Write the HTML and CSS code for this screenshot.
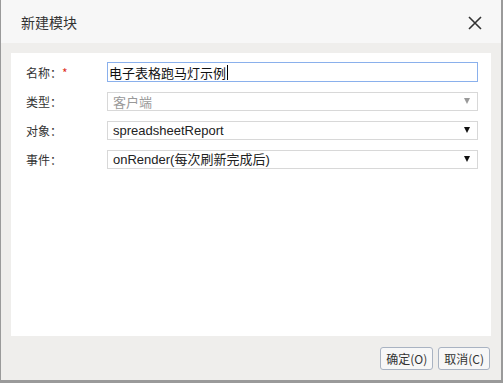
FILE: index.html
```html
<!DOCTYPE html>
<html lang="zh">
<head>
    <meta charset="UTF-8">
    <title>新建模块</title>
    <link rel="stylesheet" href="styles.css">
</head>
<body>
    <div class="dialog">
        <div class="dialog-header">
            <span class="dialog-title">新建模块</span>
            <svg class="close-icon" width="14" height="14" viewBox="0 0 14 14">
                <path d="M1 1 L13 13 M13 1 L1 13" stroke="#333" stroke-width="1.6" fill="none"/>
            </svg>
        </div>
        <div class="dialog-body">
            <div class="panel">
                <div class="form-row">
                    <label class="form-label">名称：<span class="required">*</span></label>
                    <div class="field field-focus">电子表格跑马灯示例<span class="caret"></span></div>
                </div>
                <div class="form-row">
                    <label class="form-label">类型：</label>
                    <div class="field select disabled">
                        <span class="field-text">客户端</span>
                        <span class="arrow"></span>
                    </div>
                </div>
                <div class="form-row">
                    <label class="form-label">对象：</label>
                    <div class="field select">
                        <span class="field-text">spreadsheetReport</span>
                        <span class="arrow"></span>
                    </div>
                </div>
                <div class="form-row">
                    <label class="form-label">事件：</label>
                    <div class="field select">
                        <span class="field-text">onRender(每次刷新完成后)</span>
                        <span class="arrow"></span>
                    </div>
                </div>
            </div>
            <div class="dialog-footer">
                <button class="btn">确定(O)</button>
                <button class="btn">取消(C)</button>
            </div>
        </div>
    </div>
</body>
</html>
```

FILE: styles.css
```css
html, body {
    margin: 0;
    padding: 0;
}

body {
    background: #9a9a9a;
    font-family: "Liberation Sans", "Noto Sans CJK SC", sans-serif;
    color: #333;
}

.dialog {
    box-sizing: border-box;
    width: 503px;
    height: 383px;
    border-left: 1px solid #9a9a9a;
    border-right: 2px solid #9a9a9a;
    border-bottom: 3px solid #9a9a9a;
    display: flex;
    flex-direction: column;
}

.dialog-header {
    height: 43px;
    background: #f7f7f7;
    display: flex;
    align-items: center;
    justify-content: space-between;
    padding: 0 19px 0 20px;
}

.dialog-title {
    font-family: "Noto Sans CJK SC", sans-serif;
    font-size: 14px;
    color: #333;
    margin-top: 1px;
}

.close-icon {
    display: block;
    margin-top: 2px;
}

.dialog-body {
    flex: 1;
    background: #efeeec;
    padding: 10px 10px 0 10px;
    display: flex;
    flex-direction: column;
}

.panel {
    background: #fff;
    height: 283px;
    padding: 9px 13px 0 15px;
    box-sizing: border-box;
    display: flex;
    flex-direction: column;
    gap: 9px;
}

.form-row {
    display: flex;
    align-items: center;
    height: 20px;
}

.form-label {
    width: 81px;
    font-family: "Noto Sans CJK SC", sans-serif;
    font-size: 12px;
    color: #333;
}

.required {
    color: #e0321f;
}

.field {
    flex: 1;
    box-sizing: border-box;
    height: 19px;
    border: 1px solid #d8d8d8;
    font-size: 13px;
    line-height: 17px;
    padding: 0 5px;
    display: flex;
    align-items: center;
    color: #222;
}

.field-focus {
    height: 20px;
    border-color: #8ab0ec;
    padding: 0 1px;
    font-family: "Noto Sans CJK SC", sans-serif;
    color: #111;
}

.caret {
    display: inline-block;
    width: 1px;
    height: 15px;
    background: #000;
    margin-left: 1px;
}

.select {
    justify-content: space-between;
}

.disabled {
    color: #999;
}

.disabled .field-text {
    font-family: "Noto Sans CJK SC", sans-serif;
}

.arrow {
    width: 0;
    height: 0;
    border-left: 3px solid transparent;
    border-right: 3px solid transparent;
    border-top: 6px solid #111;
    margin-right: 2px;
}

.disabled .arrow {
    border-top-color: #999;
}

.dialog-footer {
    display: flex;
    justify-content: flex-end;
    gap: 5px;
    padding: 11px 1px 0 0;
}

.btn {
    height: 23px;
    padding: 0 5px;
    border: 1px solid #a9b3c2;
    border-radius: 3px;
    background: #f7f7f7;
    font-family: "Noto Sans CJK SC", sans-serif;
    font-size: 12px;
    color: #333;
    line-height: 19px;
}
```
